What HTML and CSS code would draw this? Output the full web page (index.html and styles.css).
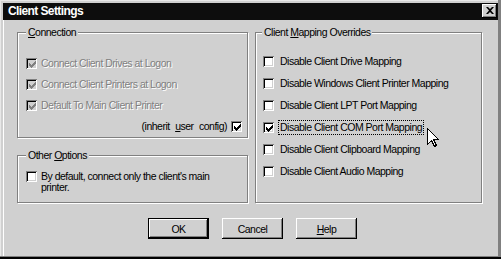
FILE: index.html
```html
<!DOCTYPE html>
<html>
<head>
<meta charset="utf-8">
<link rel="stylesheet" href="styles.css">
</head>
<body>
<div class="window">
  <div class="titlebar">
    <span class="title">Client Settings</span>
    <span class="close"><svg width="8" height="7" viewBox="0 0 8 7"><path d="M0 0h2l2 2 2-2h2L5 3.5 8 7H6L4 5 2 7H0l3-3.5z" fill="#000"/></svg></span>
  </div>
  <div class="body">
    <div class="columns">
      <div class="leftcol">
        <div class="group conn">
          <span class="legend conn-legend"><u>C</u>onnection</span>
          <div class="rows conn-rows">
            <div class="row"><span class="box disabled"><svg width="7" height="7" viewBox="0 0 7 7"><path d="M0 2h1v3h-1zM1 3h1v3h-1zM2 4h1v3h-1zM3 3h1v3h-1zM4 2h1v3h-1zM5 1h1v3h-1zM6 0h1v3h-1z"/></svg></span><span class="text dis">Connect Client Drives at Logon</span></div>
            <div class="row"><span class="box disabled"><svg width="7" height="7" viewBox="0 0 7 7"><path d="M0 2h1v3h-1zM1 3h1v3h-1zM2 4h1v3h-1zM3 3h1v3h-1zM4 2h1v3h-1zM5 1h1v3h-1zM6 0h1v3h-1z"/></svg></span><span class="text dis">Connect Client Printers at Logon</span></div>
            <div class="row"><span class="box disabled"><svg width="7" height="7" viewBox="0 0 7 7"><path d="M0 2h1v3h-1zM1 3h1v3h-1zM2 4h1v3h-1zM3 3h1v3h-1zM4 2h1v3h-1zM5 1h1v3h-1zM6 0h1v3h-1z"/></svg></span><span class="text dis">Default To Main Client Printer</span></div>
            <div class="row inherit"><span class="text wide">(inherit <u>u</u>ser config)</span><span class="box"><svg width="7" height="7" viewBox="0 0 7 7"><path d="M0 2h1v3h-1zM1 3h1v3h-1zM2 4h1v3h-1zM3 3h1v3h-1zM4 2h1v3h-1zM5 1h1v3h-1zM6 0h1v3h-1z"/></svg></span></div>
          </div>
        </div>
        <div class="group other">
          <span class="legend other-legend">Other <u>O</u>ptions</span>
          <div class="row top"><span class="box"></span><span class="text multi">By default, connect only the client's main<br>printer.</span></div>
        </div>
      </div>
      <div class="group mapping">
        <span class="legend map-legend">Client <u>M</u>apping Overrides</span>
        <div class="rows map-rows">
          <div class="row"><span class="box"></span><span class="lbl">Disable Client Drive Mapping</span></div>
          <div class="row"><span class="box"></span><span class="lbl">Disable Windows Client Printer Mapping</span></div>
          <div class="row"><span class="box"></span><span class="lbl">Disable Client LPT Port Mapping</span></div>
          <div class="row"><span class="box"><svg width="7" height="7" viewBox="0 0 7 7"><path d="M0 2h1v3h-1zM1 3h1v3h-1zM2 4h1v3h-1zM3 3h1v3h-1zM4 2h1v3h-1zM5 1h1v3h-1zM6 0h1v3h-1z"/></svg></span><span class="lbl focus">Disable Client COM Port Mapping</span></div>
          <div class="row"><span class="box"></span><span class="lbl">Disable Client Clipboard Mapping</span></div>
          <div class="row"><span class="box"></span><span class="lbl">Disable Client Audio Mapping</span></div>
        </div>
      </div>
    </div>
    <div class="buttons">
      <button class="btn default">OK</button>
      <button class="btn">Cancel</button>
      <button class="btn"><u>H</u>elp</button>
    </div>
  </div>
  <svg class="cursor" width="12" height="20" viewBox="0 0 12 20"><path d="M0.5 0.5V16.5L4.5 12.5L7.5 18.5L9.5 17.5L6.5 11.5H11.5Z" fill="#fff" stroke="#000" stroke-width="1" shape-rendering="crispEdges"/></svg>
</div>
</body>
</html>
```
FILE: styles.css
```css
* { box-sizing: border-box; }
html, body { margin: 0; padding: 0; }
body {
  width: 501px;
  height: 259px;
  overflow: hidden;
  background: #d0d0d0;
  font-family: "Liberation Sans", Arial, sans-serif;
  font-size: 10.5px;
  letter-spacing: -0.5px;
  color: #000;
}
.window {
  position: relative;
  width: 501px;
  height: 259px;
  padding: 3px;
  display: flex;
  flex-direction: column;
  background: #d0d0d0;
  box-shadow: inset 0 -2px 0 #000, inset 0 -3px 0 #808080, inset -3px 0 0 #808080, inset 0 1px 0 #e8e8e8, inset 1px 0 0 #e8e8e8;
}
.titlebar {
  height: 17px;
  flex: none;
  background: #0d0d0d;
  color: #fff;
  display: flex;
  align-items: center;
  padding: 0 1px 0 5px;
  font-weight: bold;
  font-size: 12px;
  letter-spacing: -0.6px;
}
.title { flex: 1; line-height: 17px; }
.close {
  width: 15px;
  height: 14px;
  margin-top: -1px;
  background: #d0d0d0;
  display: flex;
  align-items: center;
  justify-content: center;
  box-shadow: inset -1px -1px 0 #000, inset 1px 1px 0 #fff, inset -2px -2px 0 #808080;
}
.close svg { display: block; margin-top: -1px; }
.body { flex: 1; padding: 12px 16px 0 14px; box-shadow: inset 1px 0 0 #fff; }
.columns { display: flex; gap: 7px; }
.leftcol { width: 231px; display: flex; flex-direction: column; }
.group {
  position: relative;
  border: 1px solid #808080;
  box-shadow: inset 1px 1px 0 #fff, 1px 1px 0 #fff;
}
.legend {
  position: absolute;
  top: -7px;
  padding: 0 2px;
  background: #d0d0d0;
  line-height: 13px;
  white-space: nowrap;
}
.conn-legend { left: 8px; }
.other-legend { left: 8px; }
.map-legend { left: 6px; }
.conn { height: 106px; padding: 25px 5px 5px 8px; }
.other { height: 48px; margin-top: 17px; padding: 15px 8px 0 8px; }
.mapping { flex: 1; padding: 23px 7px 0 7px; }
.rows { display: flex; flex-direction: column; }
.conn-rows { gap: 10px; }
.map-rows { gap: 11px; }
.row { display: flex; align-items: center; height: 11px; gap: 4px; }
.row.top { align-items: flex-start; height: auto; }
.row.inherit { justify-content: flex-end; gap: 4px; }
.box {
  flex: none;
  width: 11px;
  height: 11px;
  background: #fff;
  display: flex;
  align-items: center;
  justify-content: center;
  box-shadow: inset 1px 1px 0 #808080, inset -1px -1px 0 #fff, inset 2px 2px 0 #000, inset -2px -2px 0 #d0d0d0;
}
.box svg { display: block; margin: 1px 0 0 1px; fill: #000; }
.box.disabled { background: #d0d0d0; }
.box.disabled svg { fill: #808080; }
.text { line-height: 11px; white-space: nowrap; }
.text.wide { word-spacing: 3px; }
.text.dis { color: #808080; text-shadow: 1px 1px 0 #fff; }
.text.multi { line-height: 11px; }
.lbl {
  line-height: 13px;
  padding: 0 1px;
  border: 1px dotted transparent;
  white-space: nowrap;
}
.lbl.focus { border-color: #000; }
.buttons {
  display: flex;
  justify-content: center;
  gap: 13px;
  margin-top: 15px;
  padding-left: 6px;
}
.btn {
  width: 61px;
  height: 21px;
  padding: 0;
  border: 0;
  background: #d0d0d0;
  font: inherit;
  letter-spacing: inherit;
  color: #000;
  box-shadow: inset -1px -1px 0 #000, inset 1px 1px 0 #fff, inset -2px -2px 0 #808080;
}
.btn.default {
  box-shadow: inset 0 0 0 1px #000, inset -2px -2px 0 #000, inset 2px 2px 0 #fff, inset -3px -3px 0 #808080;
}
.cursor { position: absolute; left: 427px; top: 128px; }
```
